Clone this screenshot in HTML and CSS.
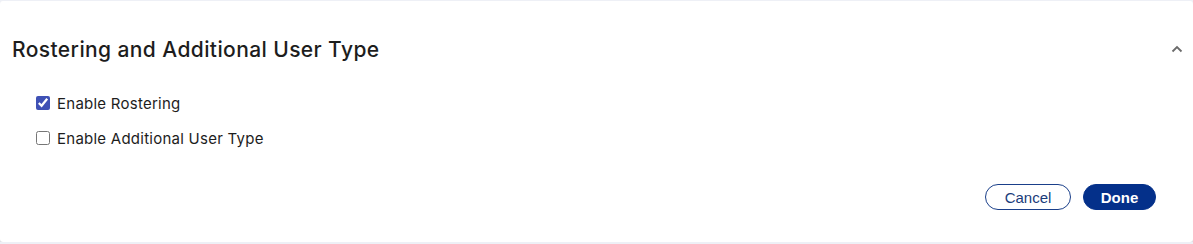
FILE: index.html
```html
<!DOCTYPE html>
<html>
<head>
<meta charset="utf-8">
<link rel="stylesheet" href="styles.css">
</head>
<body>
<section class="card">
  <header class="card-head">
    <h2 class="title">Rostering and Additional User Type</h2>
    <button class="collapse" aria-label="Collapse">
      <svg width="12" height="8" viewBox="0 0 12 8"><path d="M1.5 6.5 L6 2 L10.5 6.5" fill="none" stroke="#6b6b6b" stroke-width="1.8"/></svg>
    </button>
  </header>
  <div class="options">
    <label class="opt"><input type="checkbox" checked> <span>Enable Rostering</span></label>
    <label class="opt"><input type="checkbox"> <span>Enable Additional User Type</span></label>
  </div>
  <footer class="actions">
    <button class="btn btn-outline">Cancel</button>
    <button class="btn btn-primary">Done</button>
  </footer>
</section>
</body>
</html>
```
FILE: styles.css
```css
html, body { margin: 0; padding: 0; }
body {
  background: #eef0f6;
  font-family: Inter, "Open Sans", sans-serif;
  color: #1c1c1c;
  padding-top: 1px;
}
.card {
  background: #fff;
  height: 241px;
  box-sizing: border-box;
  border-radius: 3px;
  box-shadow: 0 1px 1px rgba(0,0,0,0.12);
  display: flex;
  flex-direction: column;
}
.card-head {
  display: flex;
  align-items: center;
  justify-content: space-between;
  padding: 35px 12px 0 12px;
  height: 26px;
}
.title {
  margin: 0;
  font-size: 21px;
  font-weight: 500;
  letter-spacing: 0.4px;
  color: #1d1d1d;
}
.collapse {
  border: 0;
  background: none;
  padding: 0;
  margin-right: -2px;
  display: flex;
}
.options {
  display: flex;
  flex-direction: column;
  gap: 17px;
  padding: 32px 0 0 36px;
}
.opt {
  display: flex;
  align-items: center;
  font-size: 15px;
  letter-spacing: 0.25px;
  height: 18px;
  color: #1d1d1d;
}
.opt input {
  margin: 0 7px 0 0;
  width: 14px;
  height: 14px;
  accent-color: #3f51b5;
}
.actions {
  display: flex;
  justify-content: flex-end;
  gap: 12px;
  padding: 37px 37px 0 0;
}
.btn {
  font-family: "Liberation Sans", Arial, sans-serif;
  font-size: 15px;
  height: 26px;
  border-radius: 13px;
  box-sizing: border-box;
  cursor: pointer;
}
.btn-outline {
  width: 86px;
  background: #fff;
  color: #1a3c7a;
  border: 1px solid #1a3f8a;
}
.btn-primary {
  width: 73px;
  background: #04308a;
  color: #fff;
  border: 1px solid #04308a;
  font-weight: 700;
}
```
